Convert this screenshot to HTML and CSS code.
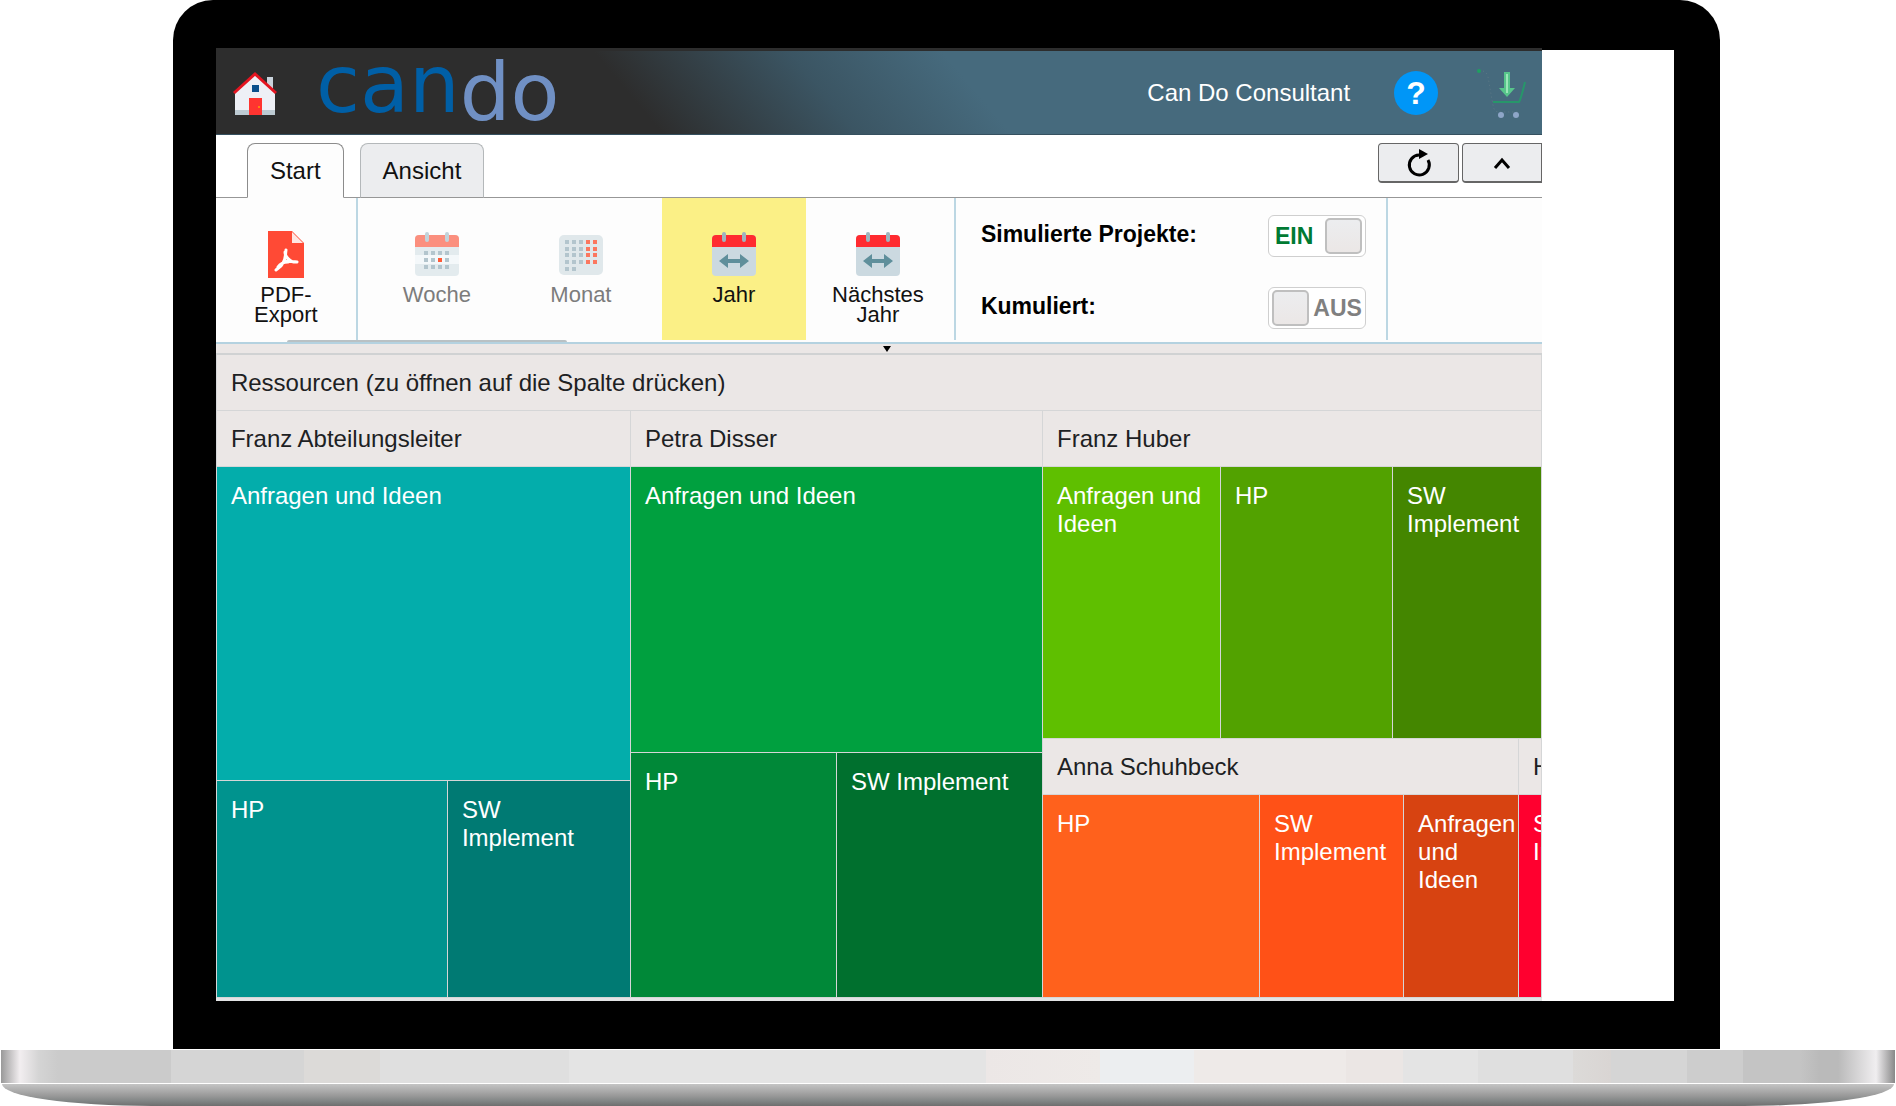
FILE: index.html
```html
<!DOCTYPE html>
<html lang="de">
<head>
<meta charset="utf-8">
<meta name="viewport" content="width=device-width, initial-scale=1">
<title>Can Do – Ressourcen</title>
<link rel="stylesheet" href="styles.css">
</head>
<body>
<div class="laptop">
  <div class="lid">
    <div class="display">
      <div class="app">
        <header class="topbar">
          <a class="home" href="#" aria-label="Startseite">
            <svg width="46" height="46" viewBox="0 0 46 46">
              <path d="M35 7h6v14h-6z" fill="#c9d3dc"/>
              <path d="M23 4 43 22v23H3V22z" fill="#eef0f6"/>
              <path d="M3 40h40v5H3z" fill="#bccad2"/>
              <path d="M17 28h13v17H17z" fill="#ff3430"/>
              <path d="M20 15h7v7h-7z" fill="#0a4f8c"/>
              <path d="M2 23 23 4l21 19" fill="none" stroke="#e41521" stroke-width="3"/>
              <circle cx="27" cy="37" r="1" fill="#ffa000"/>
            </svg>
          </a>
          <a class="logo" href="#"><span class="logo-can">can</span><span class="logo-do">do</span></a>
          <span class="user">Can Do Consultant</span>
          <button class="help" type="button" aria-label="Hilfe">?</button>
          <a class="cart" href="#" aria-label="Warenkorb">
            <svg width="50" height="52" viewBox="0 0 50 52">
              <path d="M3 4c8-1 9 4 10 12l4 22c1 6 3 7 7 7h18" fill="none" stroke="#5d7886" stroke-dasharray="1 3"/>
              <circle cx="3" cy="4" r="2" fill="#1fa060"/>
              <path d="M17 35h26c2-3 4-12 6-20" fill="none" stroke="#27966a" stroke-width="2"/>
              <path d="M28 5h6v16h5l-8 9-8-9h5z" fill="#57c58b"/>
              <path d="M31 7v19" stroke="#9be6b8" stroke-width="2"/>
              <circle cx="25" cy="48" r="3" fill="#8ea6c8"/>
              <circle cx="40" cy="48" r="3" fill="#8ea6c8"/>
            </svg>
          </a>
        </header>

        <nav class="tabs">
          <button class="tab tab-active" type="button">Start</button>
          <button class="tab" type="button">Ansicht</button>
          <div class="tools">
            <button class="tool" type="button" aria-label="Aktualisieren">
              <svg width="28" height="30" viewBox="0 0 28 30">
                <path d="M14 7A10 10 0 1 0 23 12" fill="none" stroke="#000" stroke-width="3"/>
                <path d="M14 1v10l9-5z" fill="#000"/>
              </svg>
            </button>
            <button class="tool tool-last" type="button" aria-label="Einklappen">
              <svg width="20" height="14" viewBox="0 0 20 14"><path d="m3 12 7-8 7 8" fill="none" stroke="#000" stroke-width="3"/></svg>
            </button>
          </div>
        </nav>

        <div class="ribbon">
          <div class="group">
            <button class="action action-pdf" type="button">
              <svg class="action-icon" viewBox="0 0 48 48">
                <path d="M6 1h24l12 12v35H6z" fill="#ff4a35"/>
                <path d="M30 2v11h11z" fill="#ffe6e2"/>
                <path d="M24 20c-1 7 0 8-3 13-2 4-5 5-7 7M23 31c3 1 9 0 12 1M23 22c0 5 4 8 8 10M16 37c2-3 6-5 10-5" fill="none" stroke="#fff" stroke-width="3" stroke-linecap="round"/>
              </svg>
              <span>PDF-<br>Export</span>
            </button>
          </div>
          <div class="group group-period">
            <button class="action" type="button" disabled>
              <svg class="action-icon" viewBox="0 0 48 48">
                <rect x="2" y="5" width="44" height="41" rx="4" fill="#e3ebee"/>
                <path d="M2 17V9q0-4 4-4h36q4 0 4 4v8z" fill="#fb8f7e"/>
                <path d="M2 25h44v9H2z" fill="#f4f8fa"/>
                <path d="M14 4v6M34 4v6" stroke="#c3d3da" stroke-width="4" stroke-linecap="round"/>
                <g fill="none" stroke="#b3c5cd" stroke-width="4" stroke-dasharray="4 3"><path d="M11 23h26M11 30h26M11 37h26"/></g>
                <path d="M25 28h4v4h-4z" fill="#ff5a36"/>
              </svg>
              <span>Woche</span>
            </button>
            <button class="action" type="button" disabled>
              <svg class="action-icon" viewBox="0 0 48 48">
                <rect x="2" y="5" width="44" height="40" rx="5" fill="#e0e8eb"/>
                <g fill="none" stroke="#b3c5cd" stroke-width="4" stroke-dasharray="4 3"><path d="M8 12h18M8 19h18M8 25h18M8 32h18M8 39h11"/></g>
                <g fill="none" stroke="#fb775f" stroke-width="4" stroke-dasharray="4 3"><path d="M29 12h11M29 19h11M29 25h11M29 32h11"/></g>
              </svg>
              <span>Monat</span>
            </button>
            <button class="action action-selected" type="button">
              <svg class="action-icon" viewBox="0 0 48 48">
                <rect x="2" y="5" width="44" height="41" rx="4" fill="#cbd9e0"/>
                <path d="M2 17V9q0-4 4-4h36q4 0 4 4v8z" fill="#ff2b30"/>
                <path d="M14 4v6M34 4v6" stroke="#9fb4bd" stroke-width="4" stroke-linecap="round"/>
                <path d="m9 31 9-7v5h12v-5l9 7-9 7v-5H18v5z" fill="#5f8f9b"/>
              </svg>
              <span>Jahr</span>
            </button>
            <button class="action" type="button">
              <svg class="action-icon" viewBox="0 0 48 48">
                <rect x="2" y="5" width="44" height="41" rx="4" fill="#cbd9e0"/>
                <path d="M2 17V9q0-4 4-4h36q4 0 4 4v8z" fill="#ff2b30"/>
                <path d="M14 4v6M34 4v6" stroke="#9fb4bd" stroke-width="4" stroke-linecap="round"/>
                <path d="m9 31 9-7v5h12v-5l9 7-9 7v-5H18v5z" fill="#5f8f9b"/>
              </svg>
              <span>Nächstes<br>Jahr</span>
            </button>
          </div>
          <div class="group group-options">
            <div class="option">
              <label for="simulated">Simulierte Projekte:</label>
              <span class="switch switch-on"><span>EIN</span><input class="knob" id="simulated" type="checkbox" checked></span>
            </div>
            <div class="option">
              <label for="cumulated">Kumuliert:</label>
              <span class="switch"><input class="knob" id="cumulated" type="checkbox"><span>AUS</span></span>
            </div>
          </div>
          <span class="scroll-thumb"></span>
        </div>
        <div class="splitter"><svg width="8" height="6" viewBox="0 0 8 6"><path d="M0 0h8L4 6z" fill="#000"/></svg></div>

        <main class="map">
          <h1 class="caption">Ressourcen (zu öffnen auf die Spalte drücken)</h1>
          <div class="people">
            <section class="person person-abteilungsleiter">
              <h2 class="caption">Franz Abteilungsleiter</h2>
              <button class="tile wide teal-1" type="button">Anfragen und Ideen</button>
              <button class="tile teal-2" type="button">HP</button>
              <button class="tile teal-3" type="button">SW Implement</button>
            </section>
            <section class="person person-disser">
              <h2 class="caption">Petra Disser</h2>
              <button class="tile wide green-1" type="button">Anfragen und Ideen</button>
              <button class="tile green-2" type="button">HP</button>
              <button class="tile green-3" type="button">SW Implement</button>
            </section>
            <div class="stack">
              <section class="person person-huber">
                <h2 class="caption">Franz Huber</h2>
                <button class="tile lime-1" type="button">Anfragen und Ideen</button>
                <button class="tile lime-2" type="button">HP</button>
                <button class="tile lime-3" type="button">SW Implement</button>
              </section>
              <div class="row">
                <section class="person person-schuhbeck">
                  <h2 class="caption">Anna Schuhbeck</h2>
                  <button class="tile orange-1" type="button">HP</button>
                  <button class="tile orange-2" type="button">SW Implement</button>
                  <button class="tile orange-3" type="button">Anfragen und Ideen</button>
                </section>
                <section class="person person-cut">
                  <h2 class="caption">H</h2>
                  <button class="tile red" type="button">SW Implement</button>
                </section>
              </div>
            </div>
          </div>
        </main>
      </div>
    </div>
  </div>
  <div class="base"></div>
  <div class="foot"></div>
</div>
</body>
</html>
```

FILE: styles.css
```css
* { box-sizing: border-box; }

body {
  margin: 0;
  background: #fff;
  color: #1d2123;
  font: 24px/28px "Liberation Sans", Arial, sans-serif;
}

button {
  margin: 0;
  padding: 0;
  border: 0;
  background: none;
  color: inherit;
  font: inherit;
}

h1, h2 { margin: 0; font: inherit; }
a { color: inherit; text-decoration: none; }
svg { display: block; flex: none; }

/* laptop frame */
.laptop { display: flex; flex-direction: column; min-height: 100vh; }

.lid {
  display: flex;
  flex: 1;
  margin: 0 9.28% 1px 9.12%;
  padding: 48px 46px 48px 43px;
  border-radius: 40px 40px 0 0;
  background: #000;
}

.display {
  display: flex;
  flex: 1;
  min-width: 0;
  background: linear-gradient(#000 2px, #fff 2px);
}

.app {
  display: flex;
  flex-direction: column;
  width: 90.95%;
  background: #fff;
  overflow: hidden;
}

.base {
  height: 33px;
  margin: 0 1px 1px;
  background: linear-gradient(90deg,
    #999 0, #f2eef0 1%, #d4d4d4 2%, #cbcbcb 3%, #cbcbcb 9%,
    #d5d5d5 9%, #d5d5d5 16%, #dcdad8 16%, #dcdad8 20%, #dfdfdf 20%, #dfdfdf 30%,
    #e4e4e4 30%, #e4e4e4 52%, #ece7e6 52%, #eeeae8 58%, #eceef0 58%, #eceef0 63%,
    #eeeae8 63%, #eeeae8 71%, #ebe6e4 71%, #ebe6e4 74%, #e4e4e4 74%, #e4e4e4 78%,
    #dfdfdf 78%, #dfdfdf 83%, #dcdad8 83%, #d9d5d3 85%, #d5d5d5 85%, #d5d5d5 89%,
    #cdcdcd 89%, #cdcdcd 92%, #c4c4c4 92%, #c4c4c4 95%, #bababa 96%, #bababa 97%,
    #f0eef0 99%, #888 100%);
}

.foot {
  height: 22px;
  margin: 0 2px;
  border-radius: 0 0 150px 150px / 0 0 22px 22px;
  background: linear-gradient(#c4c4c4, #9c9c9c 50%, #7f8383 80%, #6e6e6e);
}

/* top bar */
.topbar {
  display: flex;
  align-items: center;
  height: 87px;
  padding: 0 16px;
  border-top: 3px solid #2d2d2d;
  border-bottom: 1px solid #35505f;
  background: linear-gradient(50deg, #2d2d2d 32%, #3b5563 46%, #466a7d 57%);
  color: #fff;
}

.logo {
  display: flex;
  margin-left: 38px;
  font: 80px/72px "DejaVu Sans", sans-serif;
}
.logo-can { color: #005fa6; margin-top: -8px; }
.logo-do { color: #7090c4; }

.user { margin-left: auto; }

.help {
  width: 44px;
  height: 44px;
  margin: 0 38px 0 44px;
  border-radius: 50%;
  background: #0096f7;
  font-size: 32px;
  font-weight: bold;
}

/* tabs */
.tabs {
  display: flex;
  align-items: flex-end;
  gap: 16px;
  height: 63px;
  padding-left: 31px;
  background: linear-gradient(#fff 62px, #979797 62px);
}

.tab {
  height: 55px;
  padding: 0 22px;
  border: 1px solid #b4b8ba;
  border-bottom-color: #979797;
  border-radius: 8px 8px 0 0;
  background: #ecedef;
  color: #111;
}
.tab-active { border-color: #8c8c8c; border-bottom-color: #fdfdfd; background: #fdfdfd; }

.tools { display: flex; align-self: flex-start; gap: 3px; margin: 8px 0 0 auto; }

.tool {
  display: flex;
  align-items: center;
  justify-content: center;
  width: 81px;
  height: 40px;
  border: 1px solid #666;
  border-bottom-width: 2px;
  border-radius: 4px;
  background: #ecedef;
}
.tool-last { width: 80px; border-radius: 4px 0 0 4px; }

/* ribbon */
.ribbon {
  position: relative;
  display: flex;
  height: 146px;
  border-bottom: 2px solid #b4d2e0;
  background: #fdfdfd;
}

.group {
  display: flex;
  margin-bottom: 2px;
  border-right: 2px solid #bcd7e3;
}
.group-period { padding: 0 4px 0 7px; }

.action {
  display: flex;
  flex-direction: column;
  align-items: center;
  gap: 7px;
  width: 144px;
  padding-top: 32px;
  color: #111;
  font-size: 22px;
  line-height: 20px;
}
.action:disabled { color: #7c7c7c; }
.action-pdf { width: 140px; }
.action-selected { margin-left: 9px; background: #fbf086; }
.action-icon { width: 48px; height: 48px; }

.group-options {
  flex-direction: column;
  gap: 30px;
  width: 432px;
  padding: 17px 20px 0 25px;
  color: #000;
  font-size: 23px;
  font-weight: bold;
}

.option { display: flex; align-items: flex-start; justify-content: space-between; }
.option label { padding-top: 5px; }

.switch {
  display: flex;
  align-items: center;
  justify-content: space-between;
  width: 98px;
  height: 42px;
  padding: 0 3px;
  border: 1px solid #cfcfcf;
  border-radius: 6px;
  background: #fff;
  color: #808080;
}
.switch-on { padding-left: 6px; color: #007a33; }

.knob {
  width: 37px;
  height: 36px;
  margin: 0;
  border: 2px solid #bfbfbf;
  border-radius: 5px;
  background: linear-gradient(#ecedef, #ebe7e6);
  appearance: none;
}

.scroll-thumb {
  position: absolute;
  left: 71px;
  bottom: 0;
  width: 280px;
  height: 2px;
  border-radius: 2px 2px 0 0;
  background: #b9c1c4;
}

.splitter {
  display: flex;
  justify-content: center;
  height: 11px;
  padding: 2px 0 0 16px;
  border-bottom: 2px solid #d0d2d3;
  background: #ebe7e6;
}

/* treemap */
.map {
  display: flex;
  flex: 1;
  flex-direction: column;
  gap: 1px;
  padding: 0 1px 1px;
  border-bottom: 3px solid #e2e4e5;
  background: #d5d6d7;
}

.people {
  display: grid;
  flex: 1;
  grid-template-columns: minmax(0, 413fr) minmax(0, 411fr) minmax(0, 498fr);
  gap: 1px;
}

.person { display: grid; gap: 1px; overflow: hidden; }
.person .caption, .wide { grid-column: 1 / -1; }

.person-abteilungsleiter { grid: 55px 313fr 216fr / minmax(0, 230fr) minmax(0, 182fr); }
.person-disser { grid: 55px 285fr 244fr / minmax(0, 205fr) minmax(0, 205fr); }
.person-huber { grid: 55px 1fr / minmax(0, 177fr) minmax(0, 171fr) minmax(0, 148fr); }
.person-schuhbeck { grid: 55px 1fr / minmax(0, 216fr) minmax(0, 143fr) minmax(0, 114fr); }
.person-cut { grid: 55px 1fr / minmax(0, 1fr); }

.stack { display: grid; grid-template-rows: 328fr 258fr; gap: 1px; }
.row { display: grid; grid-template-columns: minmax(0, 475fr) minmax(0, 22fr); gap: 1px; }

.caption {
  height: 55px;
  padding: 14px;
  background: #ebe7e6;
}

.tile {
  display: flex;
  align-items: flex-start;
  padding: 15px 16px 15px 14px;
  color: #fff;
  text-align: left;
}

.teal-1 { background: #03adab; }
.teal-2 { background: #00938e; }
.teal-3 { background: #007a73; }
.green-1 { background: #00a03f; }
.green-2 { background: #008838; }
.green-3 { background: #00702e; }
.lime-1 { background: #5fbf00; }
.lime-2 { background: #52a200; }
.lime-3 { background: #448600; }
.orange-1 { background: #ff611c; }
.orange-2 { background: #ff5117; }
.orange-3 { background: #d74311; padding-right: 0; }
.red { background: #ff002f; }
```
